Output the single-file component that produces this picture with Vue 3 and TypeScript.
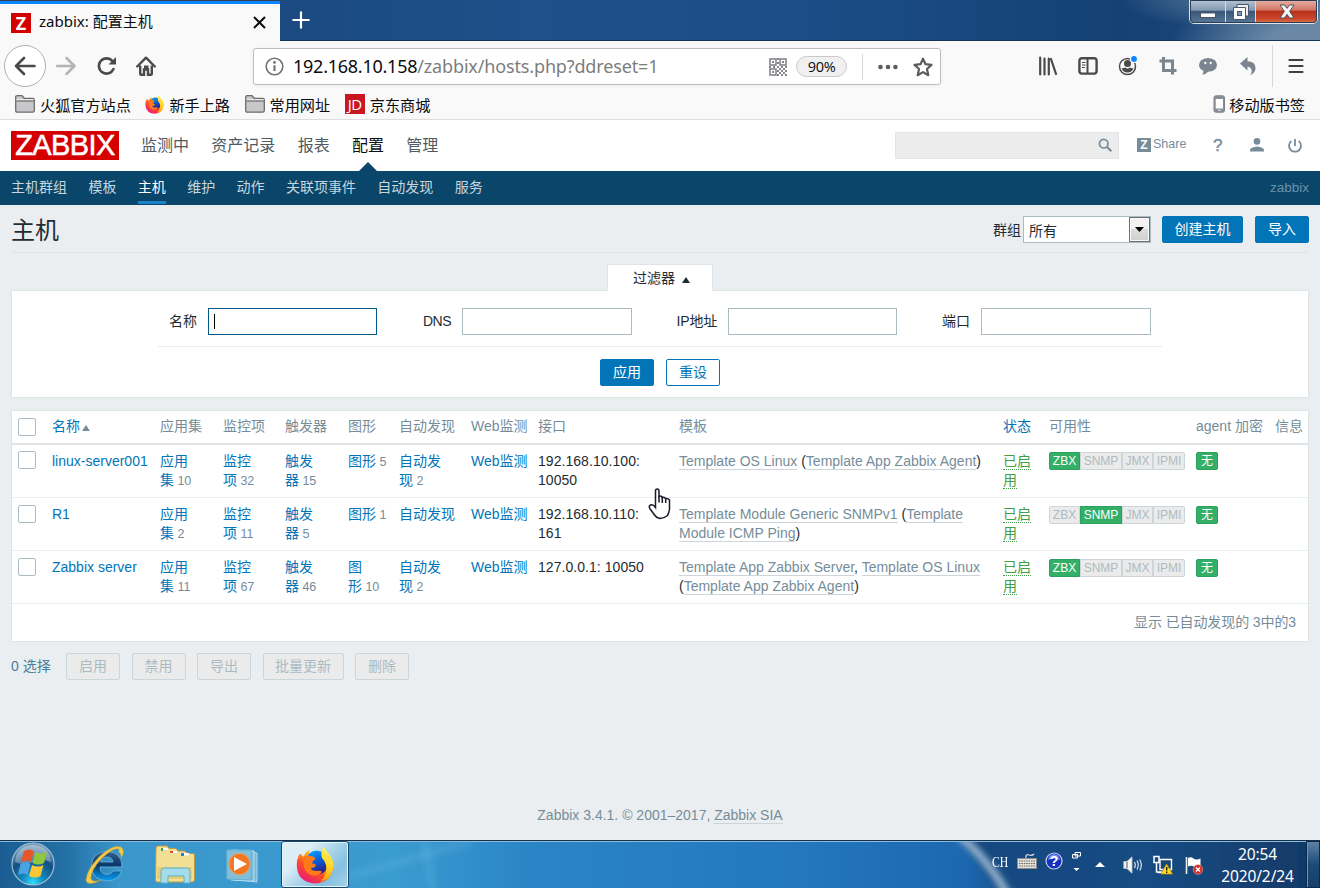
<script setup lang="ts">
interface Template { pre: string; name: string; post: string }
interface Host {
  name: string
  apps: string
  items: string
  triggers: string
  graphs: string[]
  graphCount: string
  discovery: string[]
  discoveryCount: string
  iface: string[]
  templates: Template[][]
  agent: string
}

const mainMenu = ['监测中', '资产记录', '报表', '配置', '管理']
const subMenu = ['主机群组', '模板', '主机', '维护', '动作', '关联项事件', '自动发现', '服务']
const filters = [
  { label: '名称', cls: 'f-name' },
  { label: 'DNS', cls: 'f-dns' },
  { label: 'IP地址', cls: 'f-ip' },
  { label: '端口', cls: 'f-port' },
]
const columns = ['应用集', '监控项', '触发器', '图形', '自动发现', 'Web监测', '接口', '模板']
const agents = ['ZBX', 'SNMP', 'JMX', 'IPMI']
const actions = ['启用', '禁用', '导出', '批量更新', '删除']

const hosts: Host[] = [
  {
    name: 'linux-server001', apps: '10', items: '32', triggers: '15',
    graphs: ['图形'], graphCount: '5', discovery: ['自动发', '现'], discoveryCount: '2',
    iface: ['192.168.10.100:', '10050'],
    templates: [[
      { pre: '', name: 'Template OS Linux', post: ' (' },
      { pre: '', name: 'Template App Zabbix Agent', post: ')' },
    ]],
    agent: 'ZBX',
  },
  {
    name: 'R1', apps: '2', items: '11', triggers: '5',
    graphs: ['图形'], graphCount: '1', discovery: ['自动发现'], discoveryCount: '',
    iface: ['192.168.10.110:', '161'],
    templates: [
      [{ pre: '', name: 'Template Module Generic SNMPv1', post: ' (' }, { pre: '', name: 'Template', post: '' }],
      [{ pre: '', name: 'Module ICMP Ping', post: ')' }],
    ],
    agent: 'SNMP',
  },
  {
    name: 'Zabbix server', apps: '11', items: '67', triggers: '46',
    graphs: ['图', '形'], graphCount: '10', discovery: ['自动发', '现'], discoveryCount: '2',
    iface: ['127.0.0.1: 10050'],
    templates: [
      [{ pre: '', name: 'Template App Zabbix Server', post: ', ' }, { pre: '', name: 'Template OS Linux', post: '' }],
      [{ pre: '(', name: 'Template App Zabbix Agent', post: ')' }],
    ],
    agent: 'ZBX',
  },
]
</script>

<template>
  <div class="screen">
    <svg class="defs" width="0" height="0">
      <defs>
        <linearGradient id="fxBody" x1="0.8" y1="0.05" x2="0.2" y2="1">
          <stop offset="0" stop-color="#fff044" /><stop offset="0.35" stop-color="#ffa91a" />
          <stop offset="0.62" stop-color="#ff4a2a" /><stop offset="1" stop-color="#e31587" />
        </linearGradient>
        <linearGradient id="fxBlue" x1="0.3" y1="0" x2="0.6" y2="1">
          <stop offset="0" stop-color="#0a9cf8" /><stop offset="0.5" stop-color="#0b57d0" /><stop offset="1" stop-color="#36157c" />
        </linearGradient>
        <linearGradient id="fxTail" x1="0.6" y1="0" x2="0.4" y2="1">
          <stop offset="0" stop-color="#fff36e" /><stop offset="0.55" stop-color="#ffd21e" /><stop offset="1" stop-color="#ff9a0a" />
        </linearGradient>
        <symbol id="firefox" viewBox="0 0 38 38">
          <path d="M4 7.500Q6 9 7.500 11Q9 6 13.500 4Q12.500 6 13.500 8Q17 4.500 22 5Q24 5 27 7Q26 3 28 1Q29.500 5.500 34 9.500Q38 15 37 22Q35 36 20 37.500Q3 37 1 22Q0 13 4 7.500Z" fill="url(#fxBody)" />
          <path d="M12 9Q17 3 25 5.500Q32 9 31 20Q30 29 20 28.500Q10 27 12 18Z" fill="url(#fxBlue)" />
          <path d="M7.500 11Q12 9 15 10Q18 10 19.500 13Q16 15 16 17Q19 18 20 19Q19 22 15 22Q15 25 21 25Q25 24 26 26Q22 31 15 29Q8 26 7.500 18Z" fill="#ff7a18" />
          <path d="M28 1Q29.500 5.500 34 9.500Q38 15 37 22Q35 34 24 36Q32 28 30 19Q29 15 26 12Q24 6 28 1Z" fill="url(#fxTail)" />
        </symbol>
        <symbol id="folder" viewBox="0 0 20 18">
          <path d="M.7 15.500V2.200Q.7.700 2.200.7H7L9.300 3.300H17.800Q19.300 3.300 19.300 4.800V15.500Q19.300 17.200 17.800 17.200H2.200Q.7 17.200.7 15.500Z" fill="#c8c8ca" stroke="#6c6c6e" stroke-width="1.300" />
          <path d="M1.300 6H18.700" stroke="#6c6c6e" stroke-width="1.200" /><path d="M1.400 4.600H18.600" stroke="#eee" stroke-width="1" />
        </symbol>
      </defs>
    </svg>

    <header class="titlebar">
      <div class="tab">
        <span class="favicon">Z</span>
        <span class="tab-title">zabbix: 配置主机</span>
        <svg class="tab-close" width="13" height="13" viewBox="0 0 13 13"><path d="M1 1L12 12M12 1L1 12" stroke="#0c0c0d" stroke-width="2" fill="none" /></svg>
      </div>
      <svg class="newtab" width="18" height="18" viewBox="0 0 18 18"><path d="M9 .5V17.500M.5 9H17.500" stroke="#fff" stroke-width="2.200" /></svg>
      <div class="winbtns">
        <div class="wb min"><svg width="16" height="6" viewBox="0 0 16 6"><rect x=".5" y="1" width="15" height="4.500" fill="#fff" stroke="#4b5568" /></svg></div>
        <div class="wb max"><svg width="18" height="18" viewBox="0 0 18 18"><path d="M5 1.500H16.500V13H5Z" fill="#eee" stroke="#48566e" /><path d="M1.500 4.500H13.500V16.500H1.500Z" fill="#fff" stroke="#48566e" /><rect x="5.500" y="8.500" width="4" height="4" fill="#7a96b8" stroke="#48566e" /></svg></div>
        <div class="wb close"><svg width="16" height="15" viewBox="0 0 16 15"><path d="M1 1H5.500L8 4.400L10.500 1H15L10.600 7.300L15 14H10.500L8 10.300L5.500 14H1L5.400 7.300Z" fill="#f6f6f6" stroke="#515060" stroke-width="1" /></svg></div>
      </div>
    </header>

    <div class="toolbar">
      <div class="back"><svg width="22" height="20" viewBox="0 0 22 20"><path d="M20.500 10H2M10 2L2 10L10 18" stroke="#4a4a4b" stroke-width="2.600" fill="none" stroke-linecap="round" stroke-linejoin="round" /></svg></div>
      <svg class="fwd" width="20" height="20" viewBox="0 0 20 20"><path d="M1 10H18M10.500 2L18.500 10L10.500 18" stroke="#b4b4b5" stroke-width="2.500" fill="none" stroke-linecap="round" stroke-linejoin="round" /></svg>
      <svg class="reload" width="20" height="20" viewBox="0 0 20 20"><path d="M16.500 13A7.600 7.600 0 1 1 15.300 5" stroke="#4a4a4b" stroke-width="2.600" fill="none" stroke-linecap="round" /><path d="M19 1V8.500H11.500Z" fill="#4a4a4b" /></svg>
      <svg class="home" width="20" height="20" viewBox="0 0 20 20"><path d="M1.200 10.500L10 1.700L18.800 10.500" stroke="#4a4a4b" stroke-width="2.400" fill="none" stroke-linecap="round" stroke-linejoin="round" /><path d="M4.200 9.500V17.700Q4.200 18.700 5.200 18.700H8V13.500H12V18.700H14.800Q15.800 18.700 15.800 17.700V9.500" stroke="#4a4a4b" stroke-width="2.400" fill="none" /><rect x="8" y="9.500" width="4.500" height="3.500" fill="#4a4a4b" /></svg>
      <div class="urlbar">
        <svg class="info" width="19" height="19" viewBox="0 0 19 19"><circle cx="9.500" cy="9.500" r="8.300" stroke="#737373" stroke-width="1.600" fill="none" /><path d="M9.500 8.300V14" stroke="#737373" stroke-width="2.200" /><circle cx="9.500" cy="5.400" r="1.400" fill="#737373" /></svg>
        <span class="url"><b>192.168.10.158</b>/zabbix/hosts.php?ddreset=1</span>
        <svg class="qr" width="18" height="18" viewBox="0 0 18 18"><g fill="none" stroke="#85868c" stroke-width="1.600"><rect x="1" y="1" width="6" height="6" /><rect x="11" y="1" width="6" height="6" /><rect x="1" y="11" width="6" height="6" /></g><path fill="#85868c" d="M3 3h2v2h-2zM13 3h2v2h-2zM3 13h2v2h-2zM8 0h2v2h-2zM8 4h2v2h-2zM0 8h2v2h-2zM4 8h2v2h-2zM8 8h2v2h-2zM12 8h2v2h-2zM16 8h2v2h-2zM10 10h2v2h-2zM14 10h2v2h-2zM8 12h2v2h-2zM12 12h2v2h-2zM16 12h2v2h-2zM10 14h2v2h-2zM14 14h2v2h-2zM8 16h2v2h-2zM12 16h2v2h-2zM16 16h2v2h-2z" /></svg>
        <span class="zoom">90%</span>
        <i class="usep"></i>
        <svg class="dots" width="20" height="6" viewBox="0 0 20 6"><g fill="#5c5c5d"><circle cx="2.500" cy="3" r="2.300" /><circle cx="10" cy="3" r="2.300" /><circle cx="17.400" cy="3" r="2.300" /></g></svg>
        <svg class="star" width="20" height="20" viewBox="0 0 20 20"><path d="M10 1.700L12.500 7.200L18.500 7.900L14 12L15.300 18.200L10 15.100L4.700 18.200L6 12L1.500 7.900L7.500 7.200Z" fill="none" stroke="#5c5c5d" stroke-width="2.200" stroke-linejoin="round" /></svg>
      </div>
      <div class="tools">
        <svg width="20" height="20" viewBox="0 0 20 20"><path d="M2.200 1.500V18.500M6.500 2.500V18.500M10.800 2.500V18.500M13 3L18 18" stroke="#4a4a4b" stroke-width="2.200" stroke-linecap="round" /></svg>
        <svg width="20" height="20" viewBox="0 0 20 20"><rect x="1.400" y="2.200" width="17.200" height="15.400" rx="2.500" fill="none" stroke="#4a4a4b" stroke-width="2.400" /><path d="M9.500 2V18" stroke="#4a4a4b" stroke-width="2" /><path d="M4 6.500H7.500M4 9H7.500M4 11.500H7" stroke="#4a4a4b" stroke-width="1.200" /></svg>
        <svg width="20" height="20" viewBox="0 0 20 20"><circle cx="9.500" cy="10.500" r="8" fill="none" stroke="#4a4a4b" stroke-width="1.500" /><circle cx="9.500" cy="7.500" r="3.500" fill="#4a4a4b" /><path d="M3.500 12Q5 12.500 7 11.500Q9.500 13.500 12 11.500Q14 12.500 15.500 12Q14 16.500 9.500 16.500Q5 16.500 3.500 12Z" fill="#4a4a4b" /><circle cx="16" cy="2.900" r="4" fill="#f9f9fa" /><circle cx="16" cy="2.900" r="2.900" fill="#0a84ff" /></svg>
        <svg width="20" height="20" viewBox="0 0 20 20"><path d="M5.500 1V14.500H18.500M1.500 5H14.500V18.500" fill="none" stroke="#7b848f" stroke-width="3" /></svg>
        <svg width="20" height="20" viewBox="0 0 20 20"><path d="M10 2Q18.700 2.500 19 9Q18.500 15.500 10 15.700Q8 18.600 4 18.500Q5.500 17 5.500 14.700Q1 13 1 9Q1.500 2.500 10 2Z" fill="#7b848f" /><circle cx="7.300" cy="7" r="1.200" fill="#f9f9fa" /><circle cx="12.700" cy="7" r="1.200" fill="#f9f9fa" /></svg>
        <svg width="20" height="20" viewBox="0 0 20 20"><path d="M2 7.500L9.500 1V5.200Q17.500 5.500 17.500 12Q17.500 16.500 12.500 19.300Q14.500 16 13.500 13.500Q12.700 11 9.500 10.500V14.500Z" fill="#7b848f" /></svg>
      </div>
      <i class="tsep"></i>
      <svg class="menu" width="16" height="16" viewBox="0 0 16 16"><path d="M1.500 2H14.500M1.500 8H14.500M1.500 14H14.500" stroke="#3f3f40" stroke-width="2.200" stroke-linecap="round" /></svg>
    </div>

    <div class="bookmarks">
      <svg width="20" height="18"><use href="#folder" /></svg><span>火狐官方站点</span>
      <svg class="bfx" width="19" height="19"><use href="#firefox" /></svg><span>新手上路</span>
      <svg width="20" height="18"><use href="#folder" /></svg><span>常用网址</span>
      <i class="jd">JD</i><span>京东商城</span>
      <svg class="phone" width="13" height="18" viewBox="0 0 13 18"><rect x="1" y=".8" width="10.500" height="16.400" rx="1.800" fill="#8a9098" stroke="#7b828b" /><rect x="2.700" y="4" width="7.200" height="9.500" fill="#fff" /><path d="M5 15.300H7.700" stroke="#eee" /></svg><span class="last">移动版书签</span>
    </div>

    <main class="page">
      <div class="zhead">
        <div class="logo"><span>ZABBIX</span></div>
        <nav class="mainmenu"><a v-for="m in mainMenu" :key="m" :class="{ on: m === '配置' }">{{ m }}</a></nav>
        <div class="search"><svg width="15" height="15" viewBox="0 0 15 15"><circle cx="5.700" cy="5.700" r="4.300" fill="none" stroke="#768d99" stroke-width="1.700" /><path d="M8.800 8.800L13.300 13.300" stroke="#768d99" stroke-width="2.100" /></svg></div>
        <i class="zico">Z</i><span class="share">Share</span>
        <span class="help">?</span>
        <svg class="user" width="16" height="14" viewBox="0 0 16 14"><circle cx="8" cy="3.400" r="3.300" fill="#768d99" /><path d="M1 13.500V11.500Q2 9.500 8 8.500Q14 9.500 15 11.500V13.500Z" fill="#768d99" /></svg>
        <svg class="power" width="16" height="16" viewBox="0 0 16 16"><path d="M4.300 3A6 6 0 1 0 11.700 3M8 1V8" fill="none" stroke="#768d99" stroke-width="1.800" /></svg>
      </div>
      <nav class="submenu">
        <a v-for="m in subMenu" :key="m" :class="{ on: m === '主机' }">{{ m }}</a>
        <span>zabbix</span>
      </nav>

      <div class="pagehead">
        <h1>主机</h1>
        <label>群组</label>
        <div class="select"><span>所有</span><i><svg width="9" height="5" viewBox="0 0 9 5"><path d="M0 0H9L4.500 5Z" fill="#000" /></svg></i></div>
        <a class="btn create">创建主机</a>
        <a class="btn import">导入</a>
      </div>

      <div class="filtertab"><span>过滤器</span><svg width="8" height="6" viewBox="0 0 8 6"><path d="M4 0L8 6H0Z" fill="#1f2c33" /></svg></div>
      <section class="filter">
        <div class="fields">
          <div v-for="f in filters" :key="f.cls" class="field" :class="f.cls"><label>{{ f.label }}</label><div class="input"><i v-if="f.cls === 'f-name'"></i></div></div>
        </div>
        <div class="fbtns"><a class="btn">应用</a><a class="btn alt">重设</a></div>
      </section>

      <section class="list">
        <table>
          <colgroup>
            <col class="c0"><col class="c1"><col class="c2"><col class="c3"><col class="c4"><col class="c5"><col class="c6"><col class="c7"><col class="c8"><col class="c9"><col class="c10"><col class="c11"><col class="c12"><col class="c13">
          </colgroup>
          <thead>
            <tr>
              <th><i class="cb"></i></th>
              <th class="lnk">名称<svg class="asc" width="8" height="6" viewBox="0 0 8 6"><path d="M4 0L8 6H0Z" fill="#768d99" /></svg></th>
              <th v-for="c in columns" :key="c">{{ c }}</th>
              <th class="lnk">状态</th><th>可用性</th><th>agent 加密</th><th>信息</th>
            </tr>
          </thead>
          <tbody>
            <tr v-for="h in hosts" :key="h.name">
              <td><i class="cb"></i></td>
              <td><a>{{ h.name }}</a></td>
              <td><a>应用<br>集</a> <small>{{ h.apps }}</small></td>
              <td><a>监控<br>项</a> <small>{{ h.items }}</small></td>
              <td><a>触发<br>器</a> <small>{{ h.triggers }}</small></td>
              <td><template v-for="(g, i) in h.graphs" :key="i"><br v-if="i"><a>{{ g }}</a></template> <small>{{ h.graphCount }}</small></td>
              <td><template v-for="(d, i) in h.discovery" :key="i"><br v-if="i"><a>{{ d }}</a></template> <small>{{ h.discoveryCount }}</small></td>
              <td><a>Web监测</a></td>
              <td class="iface"><div v-for="l in h.iface" :key="l">{{ l }}</div></td>
              <td class="tpl"><div v-for="(line, i) in h.templates" :key="i"><template v-for="t in line" :key="t.name">{{ t.pre }}<u>{{ t.name }}</u>{{ t.post }}</template></div></td>
              <td class="status"><u>已启</u><br><u>用</u></td>
              <td><div class="badges"><b v-for="a in agents" :key="a" :class="['bd', a.toLowerCase(), { ok: a === h.agent }]">{{ a }}</b></div></td>
              <td><div class="badges"><b class="bd ok none">无</b></div></td>
              <td></td>
            </tr>
          </tbody>
        </table>
        <div class="tfoot">显示 已自动发现的 3中的3</div>
      </section>

      <div class="actions"><span>0 选择</span><a v-for="a in actions" :key="a" class="btn off" :class="{ wide: a.length > 2 }">{{ a }}</a></div>
      <footer>Zabbix 3.4.1. © 2001–2017, <u>Zabbix SIA</u></footer>
    </main>

    <div class="taskbar">
      <svg class="tasklight" width="1320" height="47" viewBox="0 0 1320 47" preserveAspectRatio="none">
        <defs>
          <filter id="soft" x="-50%" y="-50%" width="200%" height="200%"><feGaussianBlur stdDeviation="3" /></filter>
          <linearGradient id="dark" x1="0" x2="1" y1="0" y2="0"><stop offset="0" stop-color="#184a80" /><stop offset="0.5" stop-color="#174b83" /><stop offset="1" stop-color="#103762" /></linearGradient>
        </defs>
        <path d="M958 -10H1340V60H1006Z" fill="url(#dark)" filter="url(#soft)" />
        <path d="M960 -6Q992 22 1009 56" stroke="#94b2ce" stroke-width="8" fill="none" filter="url(#soft)" />
        <path d="M348 35L470 0" stroke="#7cc6e6" stroke-width="8" opacity=".2" filter="url(#soft)" />
        <path d="M424 0L433 47" stroke="#7cc6e6" stroke-width="9" opacity=".2" filter="url(#soft)" />
      </svg>
      <svg class="start" width="46" height="46" viewBox="0 0 46 46">
        <defs><radialGradient id="orb" cx=".5" cy=".95" r=".9"><stop offset="0" stop-color="#2fe0ff" /><stop offset=".3" stop-color="#1287bd" /><stop offset=".65" stop-color="#134e80" /><stop offset="1" stop-color="#7a9fbd" /></radialGradient></defs>
        <circle cx="23" cy="23" r="21" fill="url(#orb)" stroke="#9fc0d4" stroke-width="1.200" />
        <path d="M5 21Q6 5 23 4Q40 5 41 21Q31 17 23 21Q14 25 5 21Z" fill="#fff" opacity=".33" />
        <path d="M14 10Q19 7 24 10L21 21Q16 18 11 21Z" fill="#e8562b" />
        <path d="M25.500 11Q31 14 37 11L34 22Q28 25 22.500 22Z" fill="#8fc73e" />
        <path d="M10.500 23Q16 20 20.500 23L17.500 34Q13 31 8 34Z" fill="#4aa4e4" />
        <path d="M22 24Q28 27 33.500 24L30.500 35Q25 38 19 35Z" fill="#fdc733" />
      </svg>
      <svg class="ie" width="44" height="42" viewBox="0 0 44 42">
        <defs><linearGradient id="ieb" x1="0" y1="0" x2="0" y2="1"><stop offset="0" stop-color="#35618e" /><stop offset=".45" stop-color="#0b3769" /><stop offset="1" stop-color="#08a0f2" /></linearGradient></defs>
        <path d="M39 23H17Q17 30 24 30.500Q29 30 30 27H38.500Q35 37 24 37Q9 36 8.500 22Q9 8 24 7.500Q39 8 39 23ZM17.500 18H30Q29 13 24 13Q18.500 13 17.500 18Z" fill="url(#ieb)" stroke="#6fb5da" stroke-width=".8" />
        <path d="M36 8Q39 11 38 14Q43 7 38 3Q30 0 17 12Q4 25 3 36Q4 43 18 36Q10 39 8 35Q7 27 19 14Q31 3 36 5Z" fill="#f3ca48" stroke="#d2a020" stroke-width=".5" />
      </svg>
      <svg class="explorer" width="40" height="40" viewBox="0 0 40 40">
        <path d="M1 3Q1 1 3 1H12L14 3.500H21L23 6H30L32 8.500H38Q39.500 8.500 39.500 10V35Q39 37 37 37H2Q.5 37 .5 35Z" fill="#f2df96" stroke="#bd9b41" />
        <path d="M2 10H37V34H2Z" fill="#e9cf70" /><path d="M2 10H37V22H2Z" fill="#f5e6a4" opacity=".7" />
        <path d="M6 3H13V5H6ZM15 6H22V8H15ZM26 8H34V10.500H26Z" fill="#fff" /><path d="M6 3H8V6H6Z" fill="#31a552" /><path d="M15 6H18V8H15Z" fill="#e04e2a" /><path d="M26 8H29V11H26Z" fill="#2186c7" />
        <path d="M6 38V26Q6 23 9 23H32Q35 23 35 26V38H29V31H13V38Z" fill="#a4dcec" stroke="#5cb1d2" />
      </svg>
      <svg class="wmp" width="34" height="36" viewBox="0 0 34 36">
        <path d="M8 2L31 5V34L8 32Z" fill="#73b6d5" stroke="#a8d8ed" /><path d="M5 2L28 3V33L5 32Z" fill="#7ebbd8" stroke="#b7e0f1" />
        <path d="M.8 2H25V32L.8 31Z" fill="#85bed8" stroke="#5fb0d6" /><circle cx="13.500" cy="16" r="10.500" fill="#f37721" stroke="#fb9a4d" /><path d="M8 9V23L21 16Z" fill="#fff" />
      </svg>
      <div class="task"><svg width="38" height="38"><use href="#firefox" /></svg></div>
      <div class="tray">
        <span class="ch">CH</span>
        <svg class="kb" width="20" height="16" viewBox="0 0 20 16"><path d="M9 5V3Q9 1 12 2T17 1" fill="none" stroke="#ddd" stroke-width="1.200" /><rect x=".5" y="5.500" width="19" height="10" fill="#e4e1da" stroke="#8b8b88" /><path d="M2 8H18M2 10.500H18M2 13H18" stroke="#6a6a6a" stroke-width="1.100" stroke-dasharray="1.600 .8" /></svg>
        <svg class="q" width="18" height="18" viewBox="0 0 18 18"><circle cx="9" cy="9" r="8" fill="#1530bc" stroke="#c5cff0" stroke-width="1.200" /><path d="M3 8Q4 2 9 2T15 8Q9 5 3 8Z" fill="#6e8aef" /><text x="9" y="14" text-anchor="middle" fill="#fff" font-size="14" font-weight="700" font-family="Liberation Sans">?</text></svg>
        <svg class="lang" width="9" height="20" viewBox="0 0 9 20"><path d="M3 .5H8.500V4H3ZM.5 2.500H5.500V6H.5Z" fill="#1b4c80" stroke="#fff" /><path d="M1.500 16H7.500L4.500 19Z" fill="#fff" /></svg>
        <svg class="up" width="10" height="5" viewBox="0 0 10 5"><path d="M5 0L10 5H0Z" fill="#fff" /></svg>
        <svg class="vol" width="20" height="18" viewBox="0 0 20 18"><path d="M.8 5.500H4L9 .8V17.200L4 12.500H.8Z" fill="#f5f5f5" stroke="#c5c5c5" stroke-width=".8" /><path d="M4 6V12" stroke="#4b5668" /><path d="M11.500 6Q13 9 11.500 12M14 4.500Q16.500 9 14 13.500M16.700 3.500Q20 9 16.700 14.500" stroke="#dbe6ef" fill="none" stroke-width="1.200" /></svg>
        <svg class="net" width="20" height="20" viewBox="0 0 20 20"><path d="M7 4.500H18.500V14.500H7Z" fill="#174675" stroke="#fff" stroke-width="1.400" /><path d="M1 1.500H6V7.500H1ZM3.500 8V17H9M5 17.500H13" fill="none" stroke="#fff" stroke-width="1.500" /><path d="M13.500 9L19.500 19H8Z" fill="#ffdc1d" stroke="#bd9409" stroke-width=".7" /><path d="M13.700 12V15.500M13.700 16.500V18" stroke="#111" stroke-width="1.300" /></svg>
        <svg class="flag" width="18" height="19" viewBox="0 0 18 19"><path d="M1.500 1V18" stroke="#eee" stroke-width="1.600" /><path d="M3 2Q6 .5 8.500 2.500T15.500 2.500V11Q12 12 9 10.500T3 10.500Z" fill="#fff" /><circle cx="13" cy="13.500" r="4.800" fill="#d52b20" stroke="#f3aaa4" stroke-width=".6" /><path d="M11 11.500L15 15.500M15 11.500L11 15.500" stroke="#fff" stroke-width="1.500" /></svg>
        <div class="clock"><div>20:54</div><div>2020/2/24</div></div>
      </div>
      <i class="peek"></i>
    </div>

    <svg class="cursor" width="23" height="32" viewBox="0 0 23 32"><path d="M7.500 19.500V3Q7.500 1 9.200 1T11 3V8.500Q12.500 7.500 14 8.800V9.500Q16 8.800 17.500 10.500Q20 10 21.500 12V21Q21 25 19.500 27.500Q16 30.500 12 30.500Q8 29.500 6.500 27L1.800 20.500Q.5 18 2.500 17Q5 16 7.500 19.500Z" fill="#fff" stroke="#1a1a2c" stroke-width="1.500" /><path d="M11 8V14.500M14.300 9V15M17.700 10.500V15" stroke="#1a1a2c" stroke-width="1.500" /></svg>
  </div>
</template>

<style>
html, body { margin: 0; overflow: hidden; }
</style>

<style scoped>
* { box-sizing: border-box; }
i, b { font-style: normal; font-weight: normal; }
u { text-decoration: none; }
svg { display: block; flex: none; }
.screen { position: relative; width: 1320px; height: 888px; overflow: hidden; display: flex; flex-direction: column; white-space: nowrap; font-family: "Liberation Sans", "Noto Sans CJK SC", sans-serif; }
.defs { position: absolute; }

.titlebar { height: 41px; flex: none; display: flex; align-items: flex-start; border-bottom: 1px solid #173458; background: radial-gradient(ellipse 150px 60px at 1320px 45px, #6a88a6 0, #6a88a6 35%, transparent 100%), radial-gradient(ellipse 130px 30px at 1250px 0, #5f7d9d 0, transparent 100%), linear-gradient(90deg, #174377 0, #1b4982 21%, #1e5189 40%, #1b4e87 60%, #154174 85%, #1d4a7b 100%); }
.tab { width: 280px; height: 41px; background: #f9f9fa; display: flex; align-items: center; padding: 3px 0 0 11px; border-top: 1px solid #35414f; box-shadow: inset 0 3px #0a84ff; }
.favicon { width: 20px; height: 20px; background: #d40000; color: #fff; font: bold 18px/20px "Open Sans"; text-align: center; }
.tab-title { margin-left: 8px; width: 214px; padding-bottom: 3px; font: 15px/20px "Noto Sans", "Noto Sans CJK SC", sans-serif; color: #0c0c0d; }
.newtab { margin: 11px 0 0 12px; }
.winbtns { margin: -1px 2px 0 auto; display: flex; width: 129px; height: 25px; border: 1px solid #dce4ec; outline: 1px solid #293c54; outline-offset: -2px; border-radius: 0 0 5px 5px; overflow: hidden; }
.wb { display: flex; align-items: center; justify-content: center; background: linear-gradient(#b7c4d2 0, #8199b2 45%, #385778 48%, #587697 100%); border-right: 1px solid #d3dde7; }
.min { width: 36px; padding-top: 7px; }
.max { width: 30px; }
.close { flex: 1; border: 0; background: linear-gradient(#e5b1a5 0, #d27764 44%, #b8301b 48%, #ca4528 80%, #d97b51 100%); }

.toolbar { height: 50px; flex: none; background: #f9f9fa; display: flex; align-items: center; padding-left: 4px; }
.back { width: 42px; height: 42px; border: 1px solid #b1b1b3; border-radius: 50%; background: #fff; display: flex; align-items: center; justify-content: center; }
.fwd { margin-left: 10px; }
.reload { margin-left: 21px; }
.home { margin-left: 19px; }
.urlbar { margin: 1px 0 0 97px; width: 688px; height: 37px; border: 1px solid #bdbdbf; border-radius: 3px; background: #fff; box-shadow: 0 1px 4px rgba(0,0,0,.06); display: flex; align-items: center; padding-left: 11px; }
.url { margin-left: 9px; width: 476px; padding-bottom: 1px; font: 18px/24px "Noto Sans", sans-serif; letter-spacing: -.15px; color: #7d7d7e; }
.url b { color: #0c0c0d; letter-spacing: -.25px; }
.zoom { margin-left: 9px; width: 51px; height: 21px; border: 1px solid #c9c9ca; border-radius: 11px; background: #f0f0f0; text-align: center; font: 14.500px/19px "Open Sans", sans-serif; color: #0c0c0d; letter-spacing: -.3px; }
.usep { width: 1px; height: 26px; background: #d9d9da; margin-left: 15px; }
.dots { margin-left: 15px; }
.star { margin-left: 15px; }
.tools { display: flex; gap: 20px; margin-left: 97px; }
.tsep { width: 1px; height: 42px; background: #d9d9da; margin-left: 14px; }
.menu { margin-left: 15px; }

.bookmarks { height: 29px; flex: none; background: #f9f9fa; border-bottom: 1px solid #dcdcdc; display: flex; align-items: center; padding: 0 15px 2px 15px; font: 15.150px/20px "Noto Sans CJK SC", sans-serif; color: #0c0c0d; }
.bookmarks span { margin: 0 14.600px 0 5px; }
.bookmarks .bfx { margin-right: 0; }
.jd { width: 20px; height: 20px; background: #c91623; color: #fff; font: 15px/20px "Open Sans"; letter-spacing: -.5px; text-align: center; }
.bookmarks .phone { margin-left: auto; }
.bookmarks .last { margin: 0 0 0 3px; }

.page { height: 720px; flex: none; background: #ebeef0; display: flex; flex-direction: column; color: #1f2c33; font-size: 14px; line-height: 19px; }
.zhead { height: 51px; flex: none; background: #fff; display: flex; align-items: center; padding-left: 11px; color: #768d99; }
.logo { width: 108px; height: 29px; background: #d40000; display: flex; align-items: center; justify-content: center; }
.logo span { color: #fff; font: 29px/29px "Liberation Sans"; letter-spacing: -.6px; -webkit-text-stroke: .5px #fff; }
.mainmenu { display: flex; gap: 22.300px; margin-left: 22px; width: 754px; font-size: 16px; line-height: 51px; color: #4f5b62; }
.mainmenu .on { color: #0b0f12; position: relative; }
.mainmenu .on::after { content: ""; position: absolute; left: 7px; bottom: 0; border: 9px solid transparent; border-top: 0; border-bottom-color: #0a466a; }
.search { width: 224px; height: 27px; background: #ececec; border: 1px solid #e2e4e5; display: flex; justify-content: flex-end; align-items: center; padding-right: 5px; }
.zico { margin: -2px 0 0 18px; width: 14px; height: 14px; background: #768d99; color: #fff; font: bold 12px/14px "Liberation Sans"; text-align: center; }
.share { margin: -2px 0 0 2px; font-size: 12.500px; width: 34px; }
.help { margin-left: 26px; width: 10px; font-size: 17px; -webkit-text-stroke: .4px #768d99; }
.user { margin: -2px 0 0 26px; }
.power { margin-left: 22px; }
.submenu { height: 34px; flex: none; background: #0a466a; display: flex; gap: 21.400px; padding: 0 11px; line-height: 33px; font-size: 14px; color: #c7d6df; }
.submenu a { height: 33px; }
.submenu .on { color: #fff; border-bottom: 3px solid #1a83c8; }
.submenu span { margin-left: auto; font-size: 13.500px; color: #6c91a6; }

.pagehead { height: 48px; flex: none; margin: 0 11px; border-bottom: 1px solid #dfe4e7; display: flex; align-items: center; }
.pagehead h1 { font-size: 24px; font-weight: normal; line-height: 30px; margin: 4px auto 0 0; }
.pagehead label { margin-right: 2px; padding-top: 3px; }
.select { width: 128px; height: 27px; margin-top: 1px; border: 1px solid #acbbc2; background: #fff; display: flex; justify-content: space-between; line-height: 28px; padding-left: 5px; }
.select i { width: 21px; height: 25px; border: 1px solid #707070; background: linear-gradient(#f2f2f2 0 48%, #dddddd 50%, #cfcfcf); display: flex; align-items: center; justify-content: center; box-shadow: inset 0 0 0 1px #f7f7f7; }
.btn { display: block; height: 27px; width: 54px; background: #0275b8; border: 1px solid #0275b8; border-radius: 2px; color: #fff; text-align: center; line-height: 25px; }
.create { width: 81px; margin: 1px 12px 0 11px; }
.import { margin-top: 1px; }
.alt { background: #fff; color: #0275b8; }

.filtertab { position: relative; z-index: 1; width: 106px; height: 27px; flex: none; margin: 11px auto -1px 607px; background: #fff; border: 1px solid #dfe4e7; border-bottom: 0; display: flex; align-items: center; padding-left: 25px; }
.filtertab svg { margin: 4px 0 0 7px; }
.filter { height: 108px; flex: none; margin: 0 11px; background: #fff; border: 1px solid #dfe4e7; padding-top: 17px; }
.fields { width: 1004px; height: 39px; margin: 0 auto; border-bottom: 1px solid #ebeef0; display: flex; }
.field { display: flex; justify-content: flex-end; line-height: 27px; }
.field label { margin-right: 11px; }
.input { width: 169px; height: 27px; border: 1px solid #acbbc2; background: #fff; }
.f-name { width: 219px; }
.f-dns { width: 255px; }
.f-dns label { letter-spacing: -.5px; }
.f-dns .input, .f-port .input { width: 170px; }
.f-ip { width: 265px; }
.f-ip label { letter-spacing: -.2px; }
.f-port { width: 254px; }
.f-name .input { border-color: #02598c; padding: 5px; }
.f-name .input i { display: block; width: 1px; height: 15px; background: #000; }
.fbtns { display: flex; gap: 12px; justify-content: center; margin-top: 12px; }

.list { height: 232px; flex: none; margin: 12px 11px 0; background: #fff; border: 1px solid #dfe4e7; }
table { width: 1296px; table-layout: fixed; border-collapse: separate; border-spacing: 0; }
.c0 { width: 35px; } .c1 { width: 108px; } .c2 { width: 63px; } .c3 { width: 62px; } .c4 { width: 63px; } .c5 { width: 51px; } .c6 { width: 72px; } .c7 { width: 67px; } .c8 { width: 141px; } .c9 { width: 324px; } .c10 { width: 46px; } .c11 { width: 147px; } .c12 { width: 79px; } .c13 { width: 38px; }
th { height: 34px; padding: 0 0 1px 5px; text-align: left; font-weight: normal; color: #768d99; border-bottom: 2px solid #dfe4e7; }
td { height: 53px; padding: 7px 0 0 5px; vertical-align: top; border-bottom: 1px solid #ebeef0; }
td a, .lnk { color: #0275b8; }
.asc { display: inline-block; margin-left: 2px; }
small { font-size: 12.500px; color: #768d99; margin-left: -.5px; }
.cb { display: block; width: 18px; height: 18px; margin-left: 1px; border: 1px solid #acbbc2; border-radius: 2px; background: #fff; }
td .cb { margin-top: -1px; }
tr + tr .cb { margin-top: 0; }
tr + tr .badges { margin-top: 1px; }
.iface { letter-spacing: .05px; }
.tpl u { color: #768d99; border-bottom: 1px solid #ccd5d9; }
.status u { color: #429e47; border-bottom: 1px dotted #429e47; }
.badges { display: flex; }
.bd { height: 18px; background: #ebebeb; border: 1px solid #ccd5d9; color: #acbbc2; font-size: 12px; line-height: 17px; text-align: center; }
.zbx { width: 31px; border-radius: 2px 0 0 2px; } .snmp { width: 42px; } .jmx { width: 31px; } .ipmi { width: 32px; border-radius: 0 2px 2px 0; }
.ok { background: #34af67; border-color: #2f9f5e; color: #fff; }
.none { width: 22px; border-radius: 2px; }
.tfoot { text-align: right; padding: 9px 12px 0 0; color: #768d99; letter-spacing: -.1px; }

.actions { display: flex; margin: 11px 0 0 11px; line-height: 27px; color: #4c7d9a; }
.actions span { width: 55px; }
.off { background: #ebebeb; border-color: #ccd5d9; color: #acbbc2; margin-right: 11.500px; }
.wide { width: 81px; }
footer { margin-top: 126px; text-align: center; color: #768d99; }
footer u { border-bottom: 1px solid #ccd5d9; }

.taskbar { position: relative; height: 48px; flex: none; border-top: 1px solid #16314b; box-shadow: inset 0 1px #8dbbdb; display: flex; background: linear-gradient(90deg, #1b5d92 0, #2370a5 5%, #3a97cb 9%, #3a9bd0 30%, #2a85c6 40%, #2478bd 60%, #1c68b0 73%, #174b83 78%); }
.tasklight { position: absolute; left: 0; top: 1px; }
.taskbar > svg:not(.tasklight), .task, .tray { position: relative; }
.start { margin-left: 10px; }
.ie { margin: 3px 0 0 27px; }
.explorer { margin: 4px 0 0 28px; }
.wmp { margin: 7px 0 0 31px; }
.task { margin-left: 21px; width: 68px; height: 47px; border: 1px solid #18496b; border-radius: 3px; background: linear-gradient(135deg, #dcedf6 0 30%, #add6e9 50%, #85c1e0 75%, #a7d3e9 100%); box-shadow: inset 0 0 0 1px #e5f4fb; display: flex; align-items: center; justify-content: center; }
.tray { flex: 1; margin-left: 643px; display: flex; align-items: flex-start; color: #fff; }
.ch { width: 17px; margin: 11px 0 0; font: 15px/20px "Liberation Serif"; display: block; transform: scaleX(.78); transform-origin: left; }
.kb { margin: 12px 0 0 8px; }
.q { margin: 11px 0 0 8px; }
.lang { margin: 11px 0 0 9px; }
.up { margin: 21px 0 0 14px; }
.vol { margin: 15px 0 0 18px; }
.net { margin: 14px 0 0 10px; }
.flag { margin: 15px 0 0 12px; }
.clock { margin: 2px -1px 0 15px; width: 79px; text-align: center; font: 15.500px/22px "Noto Sans", sans-serif; letter-spacing: -.1px; }
.peek { position: relative; width: 14px; border: 1px solid #0d2c4d; background: linear-gradient(#5d82a6, #1d4a77 50%, #163f6c); box-shadow: inset 1px 0 #6f92b5; }
.cursor { position: absolute; left: 648px; top: 488px; }
</style>
